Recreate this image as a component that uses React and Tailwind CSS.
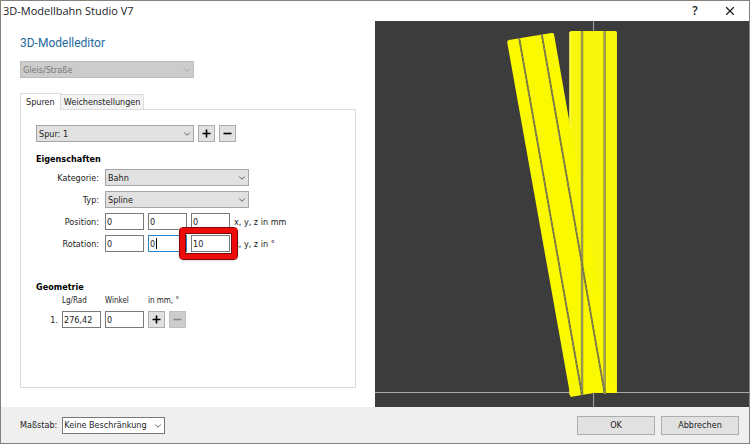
import { useState } from "react";
import { ChevronDown, X } from "lucide-react";
import clsx from "clsx";

const PlusIcon = () => (
  <svg viewBox="0 0 9 9" className="size-[9px]" aria-hidden="true">
    <path d="M4.5 0.5V8.5M0.5 4.5H8.5" stroke="currentColor" strokeWidth="1.6" />
  </svg>
);

const MinusIcon = () => (
  <svg viewBox="0 0 9 9" className="size-[9px]" aria-hidden="true">
    <path d="M0.5 4.5H8.5" stroke="currentColor" strokeWidth="1.6" />
  </svg>
);

const Select = ({ id, label, options, disabled, className, variant = "gray" }) => (
  <div className={clsx("relative", className)}>
    <select
      id={id}
      aria-label={label}
      disabled={disabled}
      className={clsx(
        "block h-[17px] w-full appearance-none border pr-4 outline-none disabled:opacity-100",
        variant === "white" ? "border-[#777] bg-white pl-px" : "pl-[2px]",
        variant === "gray" && !disabled && "border-[#a5a5a5] bg-[#e1e1e1]",
        disabled && "border-[#bcbcbc] bg-[#cccccc] text-[#777]"
      )}
    >
      {options.map((option) => (
        <option key={option}>{option}</option>
      ))}
    </select>
    <ChevronDown
      className={clsx(
        "pointer-events-none absolute top-1 right-[2px] size-[10px]",
        disabled ? "text-[#999]" : "text-[#444]"
      )}
      strokeWidth={2}
    />
  </div>
);

const NumberField = ({ id, label, value, active }) => {
  const [text, setText] = useState(value);

  return (
    <div className="relative">
      <input
        id={id}
        aria-label={label}
        type="text"
        value={text}
        onChange={(e) => setText(e.target.value)}
        className={clsx(
          "block h-[17px] w-[39px] border bg-white px-px outline-none",
          active ? "border-[#2b84c6]" : "border-[#7a7a7a]"
        )}
      />
      {active && <span className="absolute top-[3px] left-2 h-[11px] w-px bg-black" />}
    </div>
  );
};

const SquareButton = ({ label, disabled, children }) => (
  <button
    type="button"
    aria-label={label}
    disabled={disabled}
    className={clsx(
      "flex size-[17px] items-center justify-center border",
      disabled
        ? "border-[#bfbfbf] bg-[#cccccc] text-[#8a8a8a]"
        : "border-[#adadad] bg-[#e1e1e1] text-black"
    )}
  >
    {children}
  </button>
);

const FormRow = ({ label, htmlFor, children }) => (
  <div className="flex items-center gap-1">
    <label htmlFor={htmlFor} className="w-[65px] shrink-0 pr-[2px] text-right">
      {label}
    </label>
    {children}
  </div>
);

const TrackPreview = () => (
  <svg
    viewBox="375 21 374 385"
    preserveAspectRatio="xMidYMid slice"
    className="absolute inset-0 size-full"
    role="img"
    aria-label="Weiche"
  >
    <path d="M593.5 21V406M375 391.5H749" stroke="#aaaaaa" strokeWidth="1" />
    {/* straight track */}
    <path d="M569.3 32L571 31H615.5L616.8 32V392H593L569.3 394Z" fill="#f8f60a" />
    <path d="M570 32V150" stroke="#ffffa0" strokeWidth="0.8" />
    {/* diverging track, turned by 10 degrees */}
    <path
      d="M507.3 42Q507.5 40.5 509 40L551.5 33Q553.5 32.6 554 34L616.8 391.8L593 392L570.5 396Z"
      fill="#fbf900"
    />
    <path d="M582 31V394M604.5 31V393" stroke="#8d8b35" strokeWidth="2.4" />
    <path d="M582 31V394M604.5 31V393" stroke="#aaa982" strokeWidth="0.8" />
    <path d="M519.3 38L582 394M541.8 34L604.5 392" stroke="#696838" strokeWidth="1.8" />
    <path
      d="M519.3 38L582 394M541.8 34L604.5 392"
      stroke="#a3a278"
      strokeWidth="0.7"
      strokeDasharray="3 1.5"
    />
  </svg>
);

const Tabs = () => (
  <div role="tablist" className="flex items-end">
    <button
      type="button"
      role="tab"
      aria-selected="true"
      className="relative -mb-px h-[17px] border border-b-0 border-[#dcdcdc] bg-white px-[5px]"
    >
      Spuren
    </button>
    <button
      type="button"
      role="tab"
      aria-selected="false"
      className="h-[15px] border border-b-0 border-l-0 border-[#dcdcdc] bg-[#f2f2f2] px-[3px]"
    >
      Weichenstellungen
    </button>
  </div>
);

const TrackForm = () => (
  <div role="tabpanel" className="flex-1 border border-[#dcdcdc] px-[15px] pt-[15px]">
    <div className="flex items-center gap-1">
      <Select label="Spur" options={["Spur: 1"]} className="w-[158px]" />
      <SquareButton label="Spur hinzufügen">
        <PlusIcon />
      </SquareButton>
      <SquareButton label="Spur entfernen">
        <MinusIcon />
      </SquareButton>
    </div>

    <h2 className="mt-2 mb-px leading-[18px] font-bold text-black">Eigenschaften</h2>
    <div className="flex flex-col gap-[5px]">
      <FormRow label="Kategorie:" htmlFor="category">
        <Select id="category" options={["Bahn"]} className="w-36" />
      </FormRow>
      <FormRow label="Typ:" htmlFor="type">
        <Select id="type" options={["Spline"]} className="w-36" />
      </FormRow>
      <FormRow label="Position:" htmlFor="position-x">
        <NumberField id="position-x" value="0" />
        <NumberField label="Position y" value="0" />
        <NumberField label="Position z" value="0" />
        <span>x, y, z in mm</span>
      </FormRow>
      <FormRow label="Rotation:" htmlFor="rotation-x">
        <NumberField id="rotation-x" value="0" />
        <NumberField label="Rotation y" value="0" active />
        <div className="relative">
          <NumberField label="Rotation z" value="10" />
          <div className="pointer-events-none absolute -top-2 -right-2 -bottom-2 -left-3 rounded-sm border border-[#7d0808] shadow-sm">
            <div className="size-full border-[5px] border-[#ee0b0b]">
              <div className="size-full border border-[#7d0808]" />
            </div>
          </div>
        </div>
        <span>x, y, z in °</span>
      </FormRow>
    </div>

    <h2 className="mt-[26px] leading-[18px] font-bold text-black">Geometrie</h2>
    <div className="grid w-fit grid-cols-[22px_39px_39px_auto] items-center gap-x-1 text-[8px] leading-[10px]">
      <span />
      <label htmlFor="length">Lg/Rad</label>
      <label htmlFor="angle">Winkel</label>
      <span>in mm, °</span>
    </div>
    <div className="mt-[5px] grid w-fit grid-cols-[22px_39px_39px_auto] items-center gap-x-1">
      <span className="text-right">1.</span>
      <NumberField id="length" value="276,42" />
      <NumberField id="angle" value="0" />
      <div className="flex gap-1">
        <SquareButton label="Segment hinzufügen">
          <PlusIcon />
        </SquareButton>
        <SquareButton label="Segment entfernen" disabled>
          <MinusIcon />
        </SquareButton>
      </div>
    </div>
  </div>
);

const App = () => {
  return (
    <div className="flex min-h-screen flex-col border border-[#85827c] bg-white font-['DejaVu_Sans_Condensed','DejaVu_Sans',sans-serif] text-[9px] leading-3 text-[#1c1c1c]">
      <header className="flex h-5 items-center justify-between pr-3 pl-[2px] font-['Open_Sans',sans-serif]">
        <h1 className="text-[11px] leading-4">3D-Modellbahn Studio V7</h1>
        <div className="flex items-center gap-[22px]">
          <button type="button" aria-label="Hilfe" className="w-3 text-[12px] font-semibold">
            ?
          </button>
          <button type="button" aria-label="Schließen">
            <X className="size-[14px]" strokeWidth={2} />
          </button>
        </div>
      </header>

      <main className="flex flex-1">
        <section className="flex w-1/2 flex-col px-[19px] pt-3 pb-[19px]">
          <h2 className="font-['Roboto',sans-serif] text-[12px] leading-5 text-[#24699c]">
            3D-Modelleditor
          </h2>
          <Select
            label="Modelltyp"
            options={["Gleis/Straße"]}
            disabled
            className="mt-2 mb-[15px] w-[174px]"
          />
          <Tabs />
          <TrackForm />
        </section>
        <section className="relative flex-1 overflow-hidden bg-[#3c3c3c]">
          <TrackPreview />
        </section>
      </main>

      <footer className="flex h-9 items-center bg-[#efefef] pr-[10px] pl-[19px]">
        <label htmlFor="scale" className="pr-[5px]">
          Maßstab:
        </label>
        <Select id="scale" options={["Keine Beschränkung"]} variant="white" className="w-[103px]" />
        <div className="ml-auto flex gap-[6px]">
          <button type="button" className="h-[19px] w-[78px] border border-[#adadad] bg-[#e1e1e1]">
            OK
          </button>
          <button type="button" className="h-[19px] w-[78px] border border-[#adadad] bg-[#e1e1e1]">
            Abbrechen
          </button>
        </div>
      </footer>
    </div>
  );
};

export default App;
